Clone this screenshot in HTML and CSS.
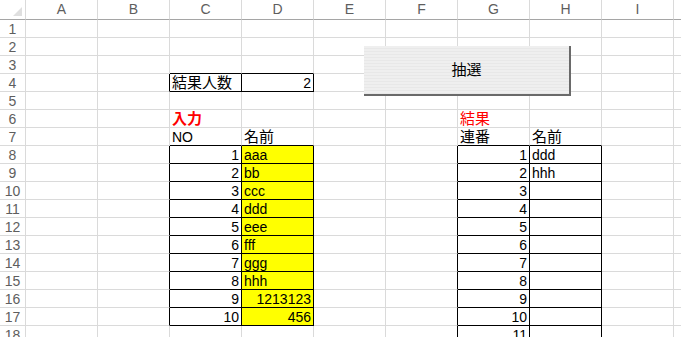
FILE: index.html
```html
<!DOCTYPE html>
<html lang="ja">
  <head>
    <meta charset="UTF-8" />
    <title>抽選</title>
    <link rel="stylesheet" href="styles.css">
  </head>
  <body>
    <div class="sheet">
      <table class="grid">
        <colgroup>
          <col class="rowhead" />
          <col span="10" class="col" />
        </colgroup>
        <tr class="head">
          <th class="corner"></th>
          <th>A</th><th>B</th><th>C</th><th>D</th><th>E</th><th>F</th><th>G</th><th>H</th><th>I</th><th></th>
        </tr>
        <tr><th>1</th><td></td><td></td><td></td><td></td><td></td><td></td><td></td><td></td><td></td><td></td></tr>
        <tr><th>2</th><td></td><td></td><td></td><td></td><td></td><td></td><td></td><td></td><td></td><td></td></tr>
        <tr><th>3</th><td></td><td></td><td class="bb"></td><td class="bb"></td><td></td><td></td><td></td><td></td><td></td><td></td></tr>
        <tr>
          <th>4</th><td></td><td class="br"></td>
          <td class="br bb jp">結果人数</td><td class="br bb num">2</td>
          <td></td><td></td><td></td><td></td><td></td><td></td>
        </tr>
        <tr><th>5</th><td></td><td></td><td></td><td></td><td></td><td></td><td></td><td></td><td></td><td></td></tr>
        <tr>
          <th>6</th><td></td><td></td>
          <td class="jp title strong">入力</td><td></td><td></td><td></td>
          <td class="jp title">結果</td><td></td><td></td><td></td>
        </tr>
        <tr>
          <th>7</th><td></td><td></td>
          <td class="bb">NO</td><td class="bb jp">名前</td><td></td><td></td>
          <td class="bb jp">連番</td><td class="bb jp">名前</td><td></td><td></td>
        </tr>
        <tr><th>8</th><td></td><td class="br"></td><td class="br bb num">1</td><td class="br bb fill">aaa</td><td></td><td class="br"></td><td class="br bb num">1</td><td class="br bb">ddd</td><td></td><td></td></tr>
        <tr><th>9</th><td></td><td class="br"></td><td class="br bb num">2</td><td class="br bb fill">bb</td><td></td><td class="br"></td><td class="br bb num">2</td><td class="br bb">hhh</td><td></td><td></td></tr>
        <tr><th>10</th><td></td><td class="br"></td><td class="br bb num">3</td><td class="br bb fill">ccc</td><td></td><td class="br"></td><td class="br bb num">3</td><td class="br bb"></td><td></td><td></td></tr>
        <tr><th>11</th><td></td><td class="br"></td><td class="br bb num">4</td><td class="br bb fill">ddd</td><td></td><td class="br"></td><td class="br bb num">4</td><td class="br bb"></td><td></td><td></td></tr>
        <tr><th>12</th><td></td><td class="br"></td><td class="br bb num">5</td><td class="br bb fill">eee</td><td></td><td class="br"></td><td class="br bb num">5</td><td class="br bb"></td><td></td><td></td></tr>
        <tr><th>13</th><td></td><td class="br"></td><td class="br bb num">6</td><td class="br bb fill">fff</td><td></td><td class="br"></td><td class="br bb num">6</td><td class="br bb"></td><td></td><td></td></tr>
        <tr><th>14</th><td></td><td class="br"></td><td class="br bb num">7</td><td class="br bb fill">ggg</td><td></td><td class="br"></td><td class="br bb num">7</td><td class="br bb"></td><td></td><td></td></tr>
        <tr><th>15</th><td></td><td class="br"></td><td class="br bb num">8</td><td class="br bb fill">hhh</td><td></td><td class="br"></td><td class="br bb num">8</td><td class="br bb"></td><td></td><td></td></tr>
        <tr><th>16</th><td></td><td class="br"></td><td class="br bb num">9</td><td class="br bb fill num">1213123</td><td></td><td class="br"></td><td class="br bb num">9</td><td class="br bb"></td><td></td><td></td></tr>
        <tr><th>17</th><td></td><td class="br"></td><td class="br bb num">10</td><td class="br bb fill num">456</td><td></td><td class="br"></td><td class="br bb num">10</td><td class="br bb"></td><td></td><td></td></tr>
        <tr><th>18</th><td></td><td></td><td></td><td></td><td></td><td class="br"></td><td class="br num">11</td><td class="br"></td><td></td><td></td></tr>
      </table>
      <button class="draw jp">抽選</button>
    </div>
  </body>
</html>
```

FILE: styles.css
```css
body {
  margin: 0;
  overflow: hidden;
  background-color: #fff;
  font-family: "Liberation Sans", "Noto Sans CJK JP", sans-serif;
  font-size: 14px;
  color: #000;
}
.sheet {
  position: relative;
}
.grid {
  border-collapse: separate;
  border-spacing: 0;
  table-layout: fixed;
  width: 746px;
}
.rowhead {
  width: 26px;
}
.col {
  width: 72px;
}
.grid td,
.grid th {
  box-sizing: border-box;
  height: 18px;
  padding: 0 2px;
  border-right: 1px solid #dadada;
  border-bottom: 1px solid #dadada;
  white-space: nowrap;
  overflow: hidden;
  vertical-align: bottom;
  line-height: 16px;
}
.grid th {
  padding: 0;
  font-weight: normal;
  color: #5e5e5e;
  text-align: center;
}
.head th {
  height: 20px;
  line-height: 19px;
  border-bottom-color: #a5a5a5;
}
.corner {
  position: relative;
}
.corner::after {
  content: "";
  position: absolute;
  right: 3px;
  bottom: 3px;
  border-left: 9px solid transparent;
  border-bottom: 9px solid #dfdfdf;
}
.grid .br {
  border-right-color: #000;
}
.grid .bb {
  border-bottom-color: #000;
}
.num {
  text-align: right;
}
.fill {
  background-color: #ffff00;
}
.jp {
  font-size: 15px;
}
.title {
  color: #ff0000;
}
.strong {
  font-weight: bold;
}
.draw {
  position: absolute;
  left: 364px;
  top: 46px;
  width: 207px;
  height: 50px;
  padding: 0 0 3px;
  border: none;
  border-right: 2px solid #6a6a6a;
  border-bottom: 2px solid #6a6a6a;
  background-color: #efefef;
  background-image: repeating-linear-gradient(#efefef 0 2px, #e8e8e8 2px 3px);
  font-family: "Liberation Sans", "Noto Sans CJK JP", sans-serif;
  color: #000;
}
```
